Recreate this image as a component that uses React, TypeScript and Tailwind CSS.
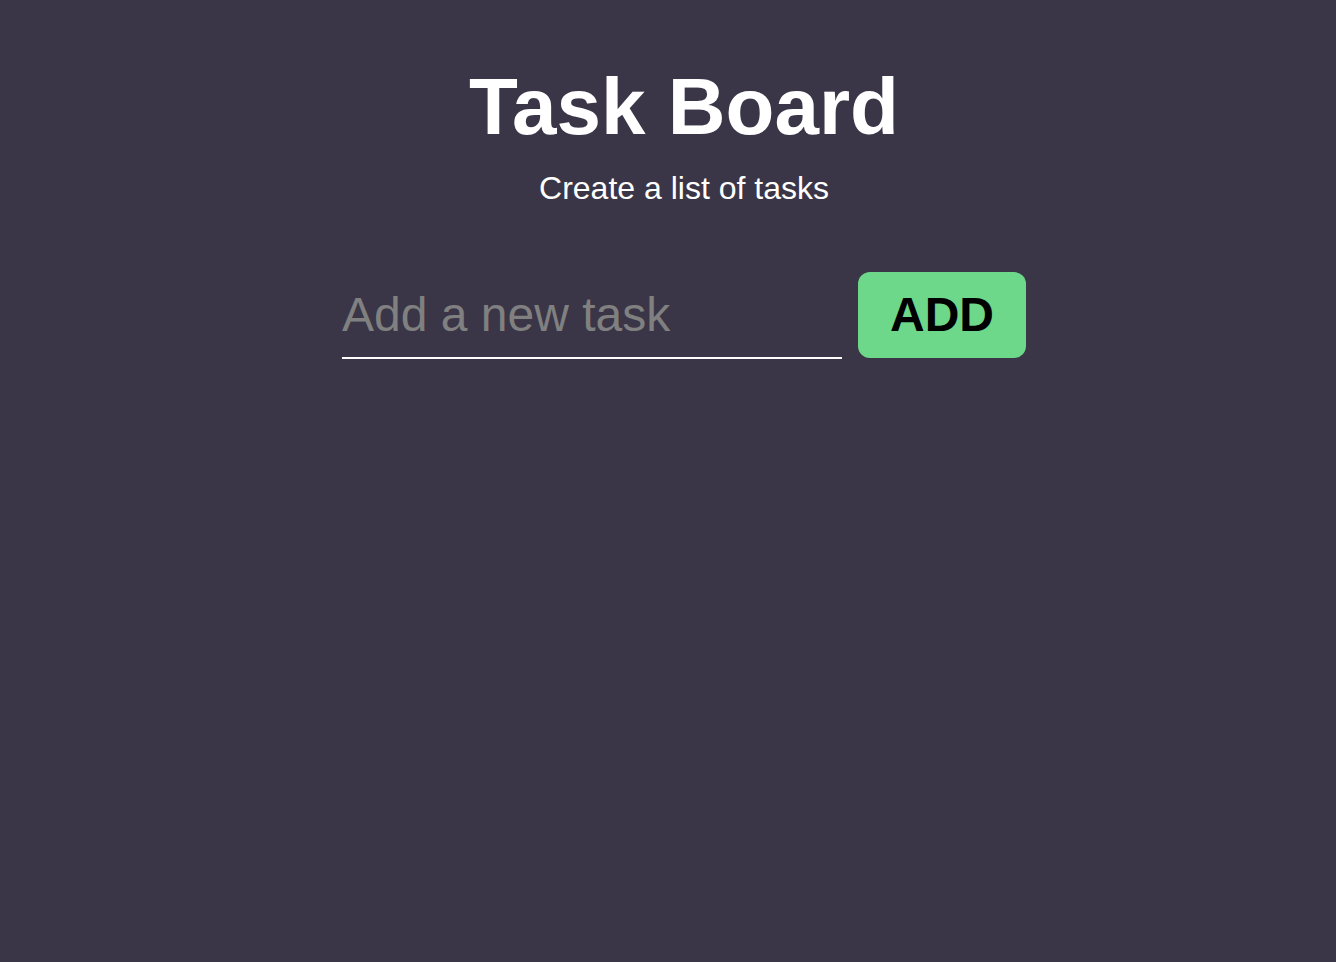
import { useState } from "react";

function App() {
  const [task, setTask] = useState("");

  return (
    <div className="min-h-screen w-full bg-[#3a3647] pl-8 font-['Liberation_Sans',Arial,sans-serif] text-white">
      <div className="flex flex-col items-center">
        {/* Header */}
        <h1 className="mt-[67px] text-[80px] font-bold leading-none">Task Board</h1>
        <p className="mt-[25px] text-[32px] leading-none">Create a list of tasks</p>

        {/* New task form */}
        <form
          className="mt-[68px] flex flex-row items-start gap-4"
          onSubmit={(e) => {
            e.preventDefault();
            setTask("");
          }}
        >
          <input
            type="text"
            value={task}
            onChange={(e) => setTask(e.target.value)}
            placeholder="Add a new task"
            className="h-[87px] w-[500px] border-b-2 border-white bg-transparent text-[48px] text-white outline-none placeholder:text-[#808080]"
          />
          <button
            type="submit"
            className="flex h-[86px] w-[168px] items-center justify-center rounded-xl bg-[#6dd88a] text-[48px] font-bold text-black"
          >
            ADD
          </button>
        </form>
      </div>
    </div>
  );
}

export default App;
